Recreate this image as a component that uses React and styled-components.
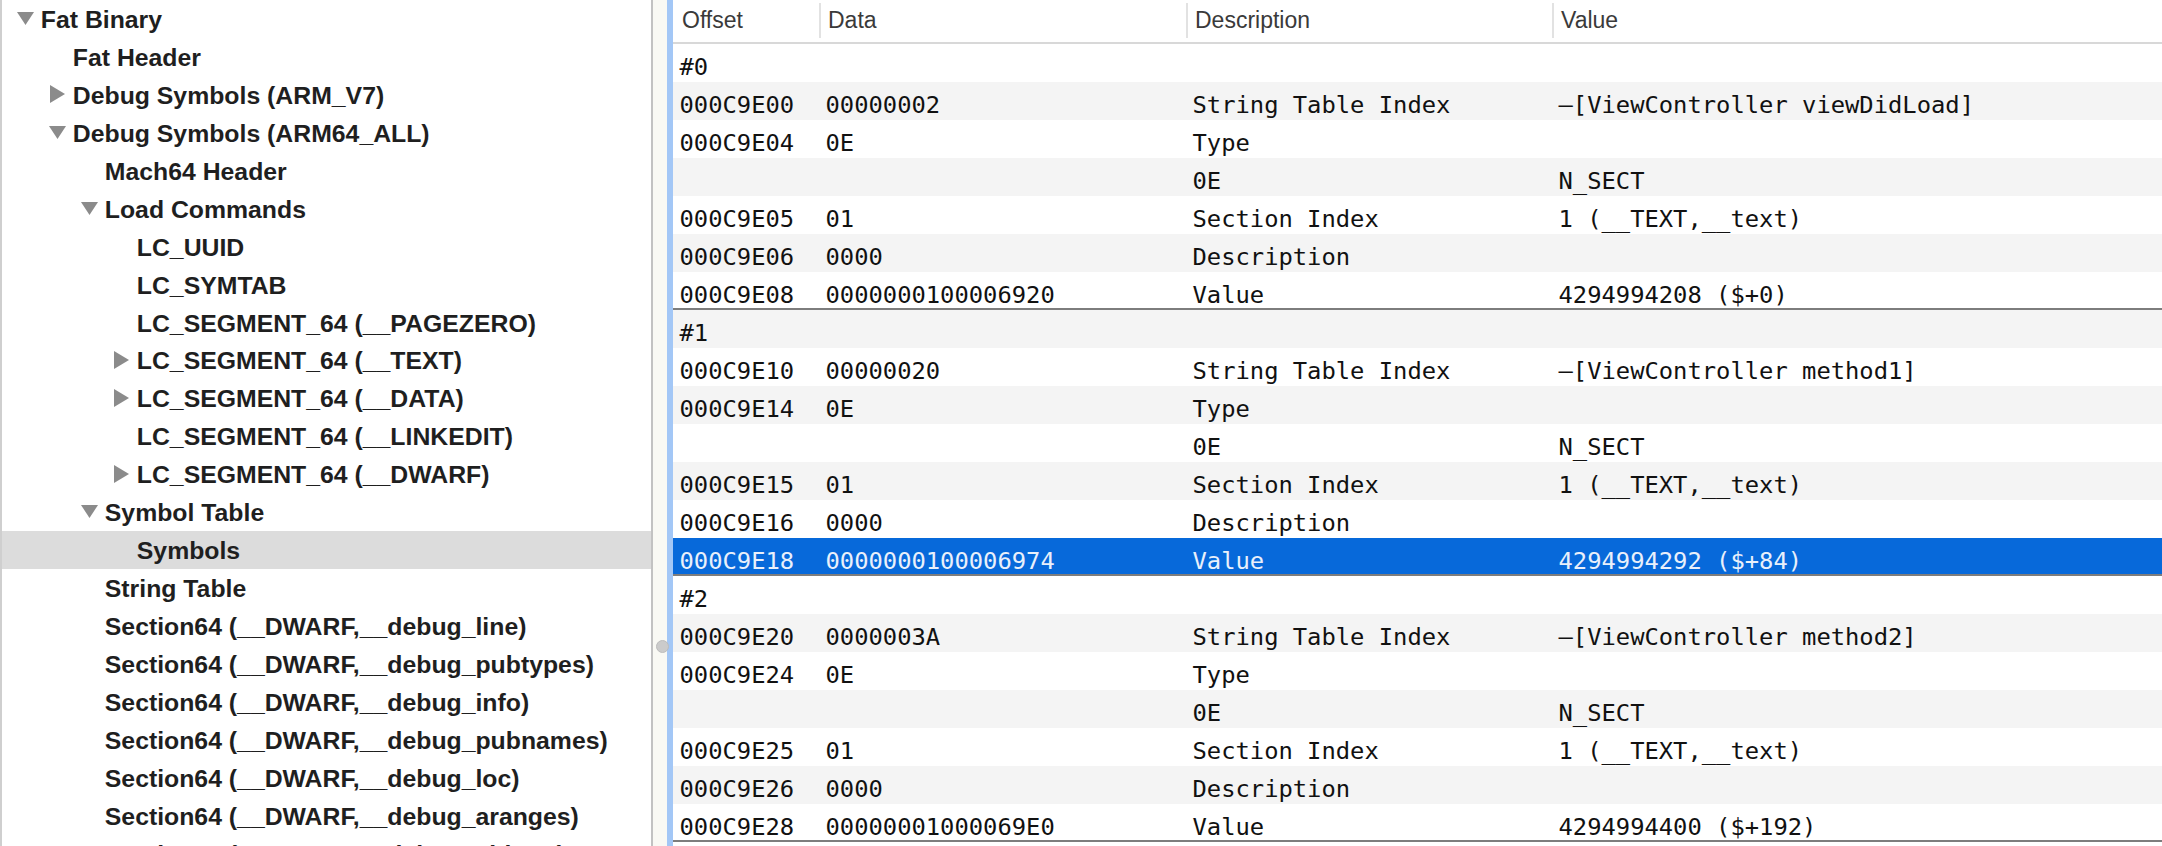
import React from 'react';
import styled, { createGlobalStyle } from 'styled-components';

const GlobalStyle = createGlobalStyle`
  html, body {
    margin: 0;
    padding: 0;
    background: #fff;
    overflow: hidden;
  }
  #root {
    height: 846px;
  }
`;

const Window = styled.div`
  display: flex;
  width: 2162px;
  height: 846px;
  overflow: hidden;
  background: #fff;
`;

// ---- left outline ----

const Sidebar = styled.div`
  flex: 0 0 653px;
  box-sizing: border-box;
  border-left: 2px solid #cfcfcf;
  border-right: 2px solid #c2c2c2;
  overflow: hidden;
`;

const TreeRow = styled.div`
  display: flex;
  align-items: center;
  box-sizing: border-box;
  height: 37.95px;
  padding-top: 2px;
  padding-left: ${p => 14.8 + p.$level * 32}px;
  background: ${p => (p.$selected ? '#dcdcdc' : 'transparent')};
  font-family: "Liberation Sans", Arial, sans-serif;
  font-weight: bold;
  font-size: 24.8px;
  color: #1f1f1f;
  white-space: nowrap;
`;

const Toggle = styled.span`
  flex: 0 0 18px;
  display: flex;
  justify-content: center;
  align-items: center;
  margin-right: 6px;
  margin-bottom: 3px;
`;

const Label = styled.span`
  line-height: 35.95px;
`;

const Arrow = ({ open }) =>
  open ? (
    <svg width="17" height="13" viewBox="0 0 17 13">
      <path d="M0 0H17L8.5 13Z" fill="#8b8b8b" />
    </svg>
  ) : (
    <svg width="15" height="18" viewBox="0 0 15 18">
      <path d="M0 0L15 9L0 18Z" fill="#8b8b8b" />
    </svg>
  );

// ---- split divider ----

const Divider = styled.div`
  flex: 0 0 14px;
  position: relative;
  background: #f9f9f4;
`;

const Knob = styled.span`
  position: absolute;
  left: 3px;
  top: 640px;
  width: 11px;
  height: 11px;
  border-radius: 50%;
  background: #cbcbcb;
  border: 1px solid #bcbcbc;
`;

const FocusBar = styled.div`
  flex: 0 0 6px;
  background: #a3c7f6;
`;

// ---- table ----

const columns = '146px 367px 366px 1fr';

const Table = styled.div`
  flex: 1;
  min-width: 0;
  overflow: hidden;
`;

const HeaderRow = styled.div`
  display: grid;
  grid-template-columns: ${columns};
  height: 44px;
  box-sizing: border-box;
  border-bottom: 2px solid #d8d8d8;
`;

const HeaderCell = styled.div`
  align-self: start;
  margin-top: 3px;
  height: 35px;
  line-height: 35px;
  padding-left: 7px;
  border-left: 2px solid ${p => (p.$first ? 'transparent' : '#e2e2e2')};
  font-family: "Liberation Sans", Arial, sans-serif;
  font-size: 23px;
  color: #3a3a3a;
  white-space: nowrap;
`;

const Row = styled.div`
  display: grid;
  grid-template-columns: ${columns};
  height: 38px;
  box-sizing: border-box;
  background: ${p => (p.$selected ? '#0769da' : p.$odd ? '#f4f4f4' : '#fff')};
  color: ${p => (p.$selected ? '#e9f0fb' : '#111')};
  border-bottom: ${p => (p.$end ? '2px solid #7d7d7d' : 'none')};
`;

const Cell = styled.div`
  padding: 8px 0 0 6.5px;
  line-height: 30px;
  font-family: "DejaVu Sans Mono", "Liberation Mono", monospace;
  font-size: 23.8px;
  white-space: nowrap;
  overflow: ${p => (p.$spill ? 'visible' : 'hidden')};
`;

const tree = [
  { level: 0, text: 'Fat Binary', arrow: 'open' },
  { level: 1, text: 'Fat Header' },
  { level: 1, text: 'Debug Symbols (ARM_V7)', arrow: 'closed' },
  { level: 1, text: 'Debug Symbols (ARM64_ALL)', arrow: 'open' },
  { level: 2, text: 'Mach64 Header' },
  { level: 2, text: 'Load Commands', arrow: 'open' },
  { level: 3, text: 'LC_UUID' },
  { level: 3, text: 'LC_SYMTAB' },
  { level: 3, text: 'LC_SEGMENT_64 (__PAGEZERO)' },
  { level: 3, text: 'LC_SEGMENT_64 (__TEXT)', arrow: 'closed' },
  { level: 3, text: 'LC_SEGMENT_64 (__DATA)', arrow: 'closed' },
  { level: 3, text: 'LC_SEGMENT_64 (__LINKEDIT)' },
  { level: 3, text: 'LC_SEGMENT_64 (__DWARF)', arrow: 'closed' },
  { level: 2, text: 'Symbol Table', arrow: 'open' },
  { level: 3, text: 'Symbols', selected: true },
  { level: 2, text: 'String Table' },
  { level: 2, text: 'Section64 (__DWARF,__debug_line)' },
  { level: 2, text: 'Section64 (__DWARF,__debug_pubtypes)' },
  { level: 2, text: 'Section64 (__DWARF,__debug_info)' },
  { level: 2, text: 'Section64 (__DWARF,__debug_pubnames)' },
  { level: 2, text: 'Section64 (__DWARF,__debug_loc)' },
  { level: 2, text: 'Section64 (__DWARF,__debug_aranges)' },
  { level: 2, text: 'Section64 (__DWARF,__debug_abbrev)' },
];

const symbols = [
  { name: 'viewDidLoad', base: 0x00, strx: '00000002', value: '0000000100006920', dec: '4294994208 ($+0)' },
  { name: 'method1', base: 0x10, strx: '00000020', value: '0000000100006974', dec: '4294994292 ($+84)' },
  { name: 'method2', base: 0x20, strx: '0000003A', value: '00000001000069E0', dec: '4294994400 ($+192)' },
];

const off = n => (0xc9e00 + n).toString(16).toUpperCase().padStart(8, '0');

const rows = [];
symbols.forEach((s, i) => {
  rows.push({ cells: [`#${i}`], spill: true });
  rows.push({ cells: [off(s.base), s.strx, 'String Table Index', `–[ViewController ${s.name}]`] });
  rows.push({ cells: [off(s.base + 4), '0E', 'Type', ''] });
  rows.push({ cells: ['', '', '0E', 'N_SECT'] });
  rows.push({ cells: [off(s.base + 5), '01', 'Section Index', '1 (__TEXT,__text)'] });
  rows.push({ cells: [off(s.base + 6), '0000', 'Description', ''] });
  rows.push({ cells: [off(s.base + 8), s.value, 'Value', s.dec], end: true, selected: i === 1 });
});

export default function App() {
  return (
    <>
      <GlobalStyle />
      <Window>
        <Sidebar>
          {tree.map((item, i) => (
            <TreeRow key={i} $level={item.level} $selected={item.selected}>
              <Toggle>{item.arrow && <Arrow open={item.arrow === 'open'} />}</Toggle>
              <Label>{item.text}</Label>
            </TreeRow>
          ))}
        </Sidebar>
        <Divider>
          <Knob />
        </Divider>
        <FocusBar />
        <Table>
          <HeaderRow>
            <HeaderCell $first>Offset</HeaderCell>
            <HeaderCell>Data</HeaderCell>
            <HeaderCell>Description</HeaderCell>
            <HeaderCell>Value</HeaderCell>
          </HeaderRow>
          {rows.map((r, i) => (
            <Row key={i} $odd={i % 2 === 1} $end={r.end} $selected={r.selected}>
              {r.cells.map((c, j) => (
                <Cell key={j} $spill={r.spill}>{c}</Cell>
              ))}
            </Row>
          ))}
        </Table>
      </Window>
    </>
  );
}
